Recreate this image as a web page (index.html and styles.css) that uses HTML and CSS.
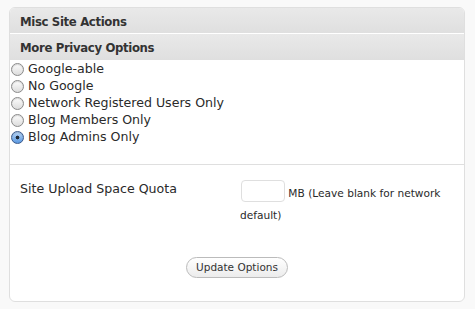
FILE: index.html
```html
<!DOCTYPE html>
<html>
<head>
<meta charset="utf-8">
<link rel="stylesheet" href="styles.css">
</head>
<body>
<div class="wrap">
  <div class="postbox">
    <h3 class="box-title">Misc Site Actions</h3>
    <h3 class="sub-title">More Privacy Options</h3>
    <div class="radio-list">
      <label class="radio-row"><input type="radio" name="privacy" class="radio"><span>Google-able</span></label>
      <label class="radio-row"><input type="radio" name="privacy" class="radio"><span>No Google</span></label>
      <label class="radio-row"><input type="radio" name="privacy" class="radio"><span>Network Registered Users Only</span></label>
      <label class="radio-row"><input type="radio" name="privacy" class="radio"><span>Blog Members Only</span></label>
      <label class="radio-row"><input type="radio" name="privacy" class="radio" checked><span>Blog Admins Only</span></label>
    </div>
    <div class="quota-section">
      <div class="quota-row">
        <div class="quota-label">Site Upload Space Quota</div>
        <div class="quota-field"><input type="text" class="quota-input"> MB (Leave blank for network default)</div>
      </div>
      <div class="actions">
        <button type="button" class="button">Update Options</button>
      </div>
    </div>
  </div>
</div>
</body>
</html>
```
FILE: styles.css
```css
html, body {
  margin: 0;
  padding: 0;
}
body {
  background: #f9f9f9;
  font-family: "DejaVu Sans", "Liberation Sans", sans-serif;
  color: #2a2a2a;
}
.wrap {
  padding: 7px 10px 0 9px;
}
.postbox {
  border: 1px solid #dfdfdf;
  border-radius: 6px;
  background: #fff;
  overflow: hidden;
}
.box-title,
.sub-title {
  margin: 0;
  padding: 0 0 0 10px;
  font-family: "DejaVu Sans Condensed", "DejaVu Sans", sans-serif;
  font-size: 13px;
  font-weight: bold;
  letter-spacing: -0.35px;
  color: #333;
  background: linear-gradient(#e9e9e9, #dfdfdf);
}
.box-title {
  height: 25px;
  line-height: 28px;
  border-bottom: 1px solid #fff;
}
.sub-title {
  height: 26px;
  line-height: 27px;
}
.radio-list {
  display: flex;
  flex-direction: column;
  padding-bottom: 19px;
}
.radio-row {
  display: flex;
  align-items: center;
  height: 17px;
  font-size: 12.6px;
  line-height: 17px;
}
.radio {
  appearance: none;
  -webkit-appearance: none;
  box-sizing: border-box;
  width: 13px;
  height: 13px;
  margin: 1px 4px 0 1px;
  border: 1px solid #8a8a8a;
  border-radius: 50%;
  background: linear-gradient(#fdfdfd, #dcdcdc);
  box-shadow: inset 0 1px 1px rgba(0,0,0,0.15);
}
.radio:checked {
  border-color: #3a5a8c;
  background: radial-gradient(circle, #1e2a3a 0, #1e2a3a 1.6px, transparent 2.2px), linear-gradient(#b9d6f7, #5a98e0);
}
.quota-section {
  border-top: 1px solid #dfdfdf;
  padding: 15px 0 23px;
}
.quota-row {
  display: grid;
  grid-template-columns: 220px 1fr;
  padding-left: 10px;
}
.quota-label {
  font-size: 12.6px;
  line-height: 17px;
}
.quota-field {
  font-size: 10.6px;
  line-height: 22px;
  padding-right: 2px;
}
.quota-input {
  box-sizing: border-box;
  width: 44px;
  height: 22px;
  margin: 0 0 0 1px;
  border: 1px solid #dfdfdf;
  border-radius: 4px;
  background: #fff;
  vertical-align: 1px;
}
.actions {
  display: flex;
  justify-content: center;
  margin-top: 31px;
}
.button {
  box-sizing: border-box;
  height: 21px;
  padding: 0 9px;
  font-family: "DejaVu Sans", "Liberation Sans", sans-serif;
  font-size: 10.5px;
  color: #333;
  border: 1px solid #bbb;
  border-radius: 11px;
  background: linear-gradient(#ffffff, #ececec);
}
```
